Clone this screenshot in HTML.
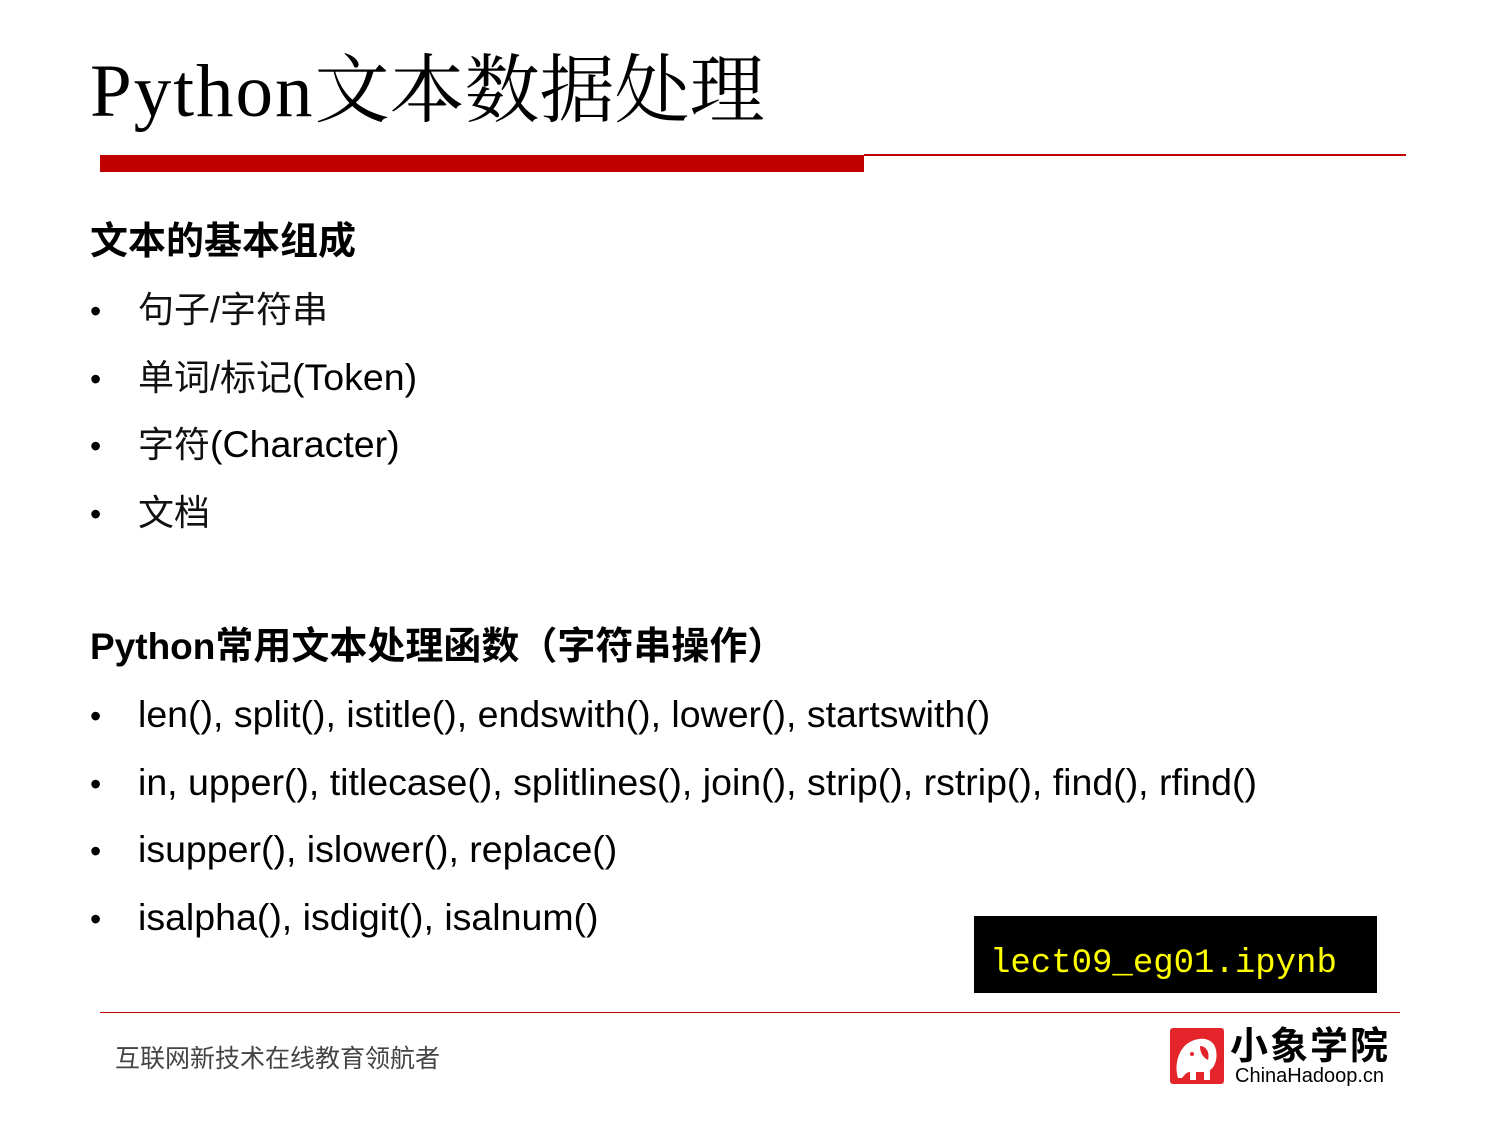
<!DOCTYPE html>
<html><head><meta charset="utf-8"><style>
body{margin:0;width:1500px;height:1125px;background:#fff;position:relative;overflow:hidden;font-family:"Liberation Sans","Noto Sans CJK SC",sans-serif;color:#000}
.a{position:absolute;white-space:nowrap;line-height:36px}
.t{position:absolute;left:90px;top:40px;white-space:nowrap;line-height:90px;font-family:"Liberation Serif","Noto Serif CJK SC",serif}
.t .l{font-size:75px;letter-spacing:2px}.t .c{font-size:75px;font-family:"Noto Serif CJK SC",serif}
.h{left:90px;font-weight:bold;font-size:37px}
.h .c{font-size:38px}
.b{left:90px;font-size:37.5px}
.b .d{display:inline-block;width:48px;font-size:32px}
.b .c{font-size:36px;color:#111}
</style></head><body>
<div class="t"><span class="l">Python</span><span class="c">文本数据处理</span></div>
<div style="position:absolute;left:100px;top:155px;width:764px;height:17px;background:#c00000"></div>
<div style="position:absolute;left:864px;top:154px;width:542px;height:2px;background:#c00000"></div>

<div class="a h" style="top:224px"><span class="c">文本的基本组成</span></div>
<div class="a b" style="top:291px"><span class="d">•</span><span class="c">句子/字符串</span></div>
<div class="a b" style="top:359px"><span class="d">•</span><span class="c">单词/标记</span>(Token)</div>
<div class="a b" style="top:426px"><span class="d">•</span><span class="c">字符</span>(Character)</div>
<div class="a b" style="top:494px"><span class="d">•</span><span class="c">文档</span></div>

<div class="a h" style="top:629px">Python<span class="c">常用文本处理函数（字符串操作）</span></div>
<div class="a b" style="top:696px"><span class="d">•</span>len(), split(), istitle(), endswith(), lower(), startswith()</div>
<div class="a b" style="top:764px"><span class="d">•</span>in, upper(), titlecase(), splitlines(), join(), strip(), rstrip(), find(), rfind()</div>
<div class="a b" style="top:831px"><span class="d">•</span>isupper(), islower(), replace()</div>
<div class="a b" style="top:899px"><span class="d">•</span>isalpha(), isdigit(), isalnum()</div>

<div style="position:absolute;left:974px;top:916px;width:403px;height:77px;background:#000"></div>
<div class="a" style="left:990px;top:944px;font-family:'Liberation Mono',monospace;font-size:34px;color:#ffff00;line-height:40px">lect09_eg01.ipynb</div>

<div style="position:absolute;left:100px;top:1012px;width:1300px;height:1px;background:#c00000"></div>
<div class="a" style="left:115px;top:1044px;font-size:25px;color:#444;line-height:30px">互联网新技术在线教育领航者</div>

<svg style="position:absolute;left:1170px;top:1028px" width="54" height="56" viewBox="0 0 54 56">
<rect width="54" height="56" rx="3" fill="#e3242b"/>
<path d="M8 50 C4 38 8 20 20 14 C30 8 44 10 46 22 C48 32 44 40 40 42 L40 52 L34 52 L34 44 L26 44 L26 52 L20 52 L20 44 C16 44 14 48 12 50 Z" fill="#fff"/>
<path d="M30 18 C36 18 40 24 38 32 C34 30 30 26 30 18Z" fill="#e3242b"/>
<circle cx="22" cy="26" r="2" fill="#e3242b"/>
</svg>
<div class="a" style="left:1230px;top:1026px;font-size:38px;font-weight:bold;line-height:42px;letter-spacing:2px">小象学院</div>
<div class="a" style="left:1235px;top:1064px;font-size:20px;line-height:24px">ChinaHadoop.cn</div>
</body></html>
